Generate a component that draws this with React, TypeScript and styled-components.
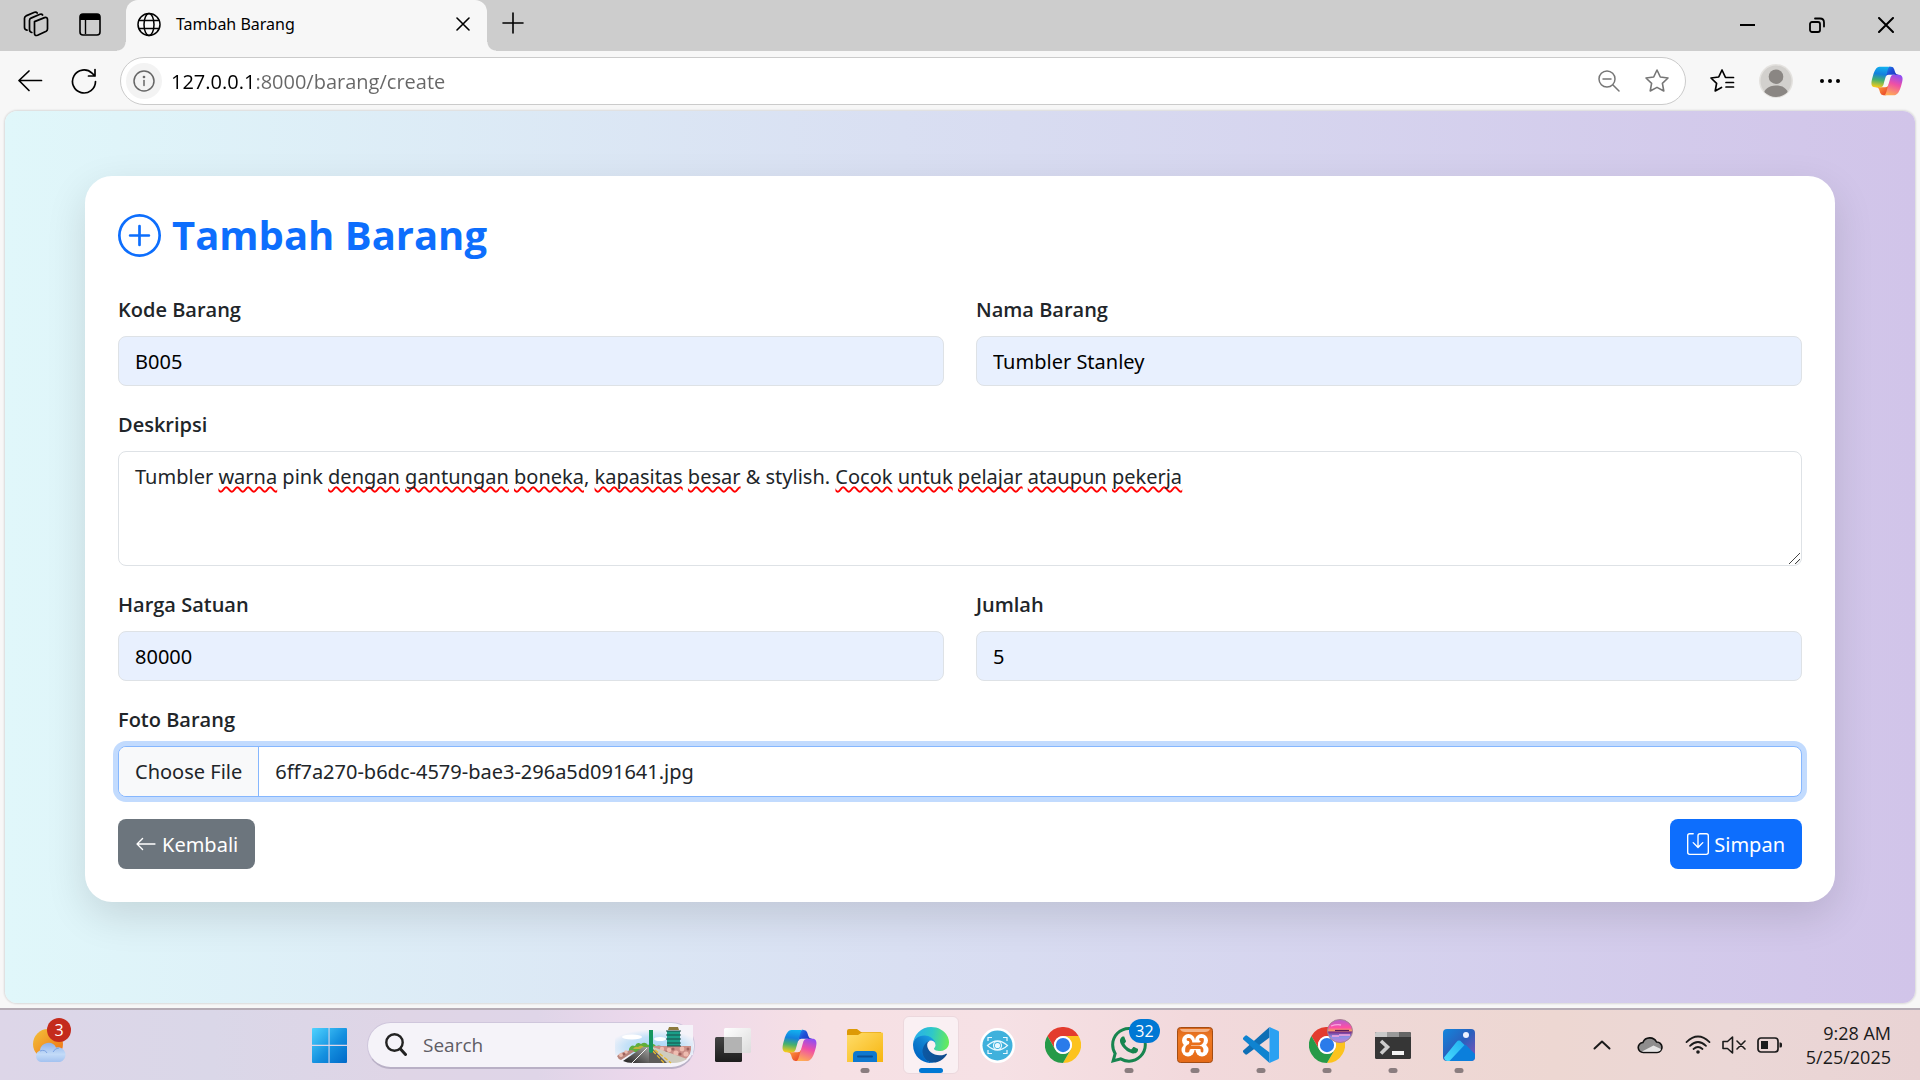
import React, { useEffect, useRef } from "react";
import styled, { createGlobalStyle, css } from "styled-components";
import { BsArrowLeft, BsPlusCircle, BsSave, BsWhatsapp } from "react-icons/bs";

const FONT = `"Open Sans", "Noto Sans", sans-serif`;
const FORM_FONT = `"Noto Sans", "Open Sans", sans-serif`;

const GlobalStyle = createGlobalStyle`
  *, *::before, *::after { box-sizing: border-box; }
  body { margin: 0; font-family: ${FONT}; color: #212529; }
  button, input, textarea { font-family: inherit; }
  svg { display: block; flex-shrink: 0; }
`;

/* ---------- shell ---------- */

const Screen = styled.div`
  display: flex;
  flex-direction: column;
  min-height: 100vh;
  background: #f7f7f7;
`;

const IconButton = styled.button<{ $w?: number; $h?: number; $color?: string }>`
  display: flex;
  align-items: center;
  justify-content: center;
  flex-shrink: 0;
  width: ${(p) => p.$w ?? 54}px;
  height: ${(p) => p.$h ?? 48}px;
  padding: 0;
  border: 0;
  background: transparent;
  color: ${(p) => p.$color ?? "#000"};
`;

const TabStrip = styled.header`
  display: flex;
  align-items: stretch;
  height: 51px;
  padding-left: 9px;
  background: #cdcdcd;
`;

const Tab = styled.div`
  position: relative;
  display: flex;
  align-items: center;
  gap: 15px;
  width: 361px;
  margin-left: 9px;
  padding: 0 6px 3px 11px;
  border-radius: 12px 12px 0 0;
  background: #f7f7f7;
  color: #000;
  font-family: ${FORM_FONT};
  font-size: 16px;

  &::before,
  &::after {
    content: "";
    position: absolute;
    bottom: 0;
    width: 9px;
    height: 9px;
  }
  &::before {
    right: 100%;
    background: radial-gradient(circle at 0 0, transparent 8px, #f7f7f7 9px);
  }
  &::after {
    left: 100%;
    background: radial-gradient(circle at 100% 0, transparent 8px, #f7f7f7 9px);
  }
`;

const TabTitle = styled.span`
  flex: 1;
`;

const WindowControls = styled.div`
  display: flex;
  margin-left: auto;
`;

const Toolbar = styled.nav`
  display: flex;
  align-items: center;
  height: 60px;
  padding: 0 3px;
`;

const AddressBar = styled.div`
  display: flex;
  align-items: center;
  flex: 1;
  height: 48px;
  margin: 0 9px;
  padding: 0 4px 0 5px;
  border: 1px solid #cbcbcb;
  border-radius: 24px;
  background: #fff;
`;

const SiteInfo = styled(IconButton)`
  border-radius: 50%;
  background: #f3f3f3;
`;

const AddressInput = styled.input`
  flex: 1;
  min-width: 0;
  height: 36px;
  margin-left: 9px;
  padding: 0;
  border: 0;
  outline: 0;
  background: linear-gradient(90deg, #000 80px, #666 80px);
  background-clip: text;
  -webkit-text-fill-color: transparent;
  font-size: 20px;
`;

/* ---------- page ---------- */

const Viewport = styled.main`
  flex: 1;
  margin: 0 5px 5px;
  padding: 65px 80px;
  border-radius: 12px;
  box-shadow: 0 0 2px 1px rgba(0, 0, 0, 0.12);
  background: linear-gradient(to right, #e0f7fa, #d1c4e9);
`;

const Card = styled.section`
  padding: 33px;
  border-radius: 27px;
  background: #fff;
  box-shadow: 0 14px 40px rgba(0, 0, 0, 0.12);
`;

const Title = styled.h2`
  display: flex;
  align-items: center;
  gap: 11px;
  margin: 0 0 32px;
  color: #0d6efd;
  font-size: 40px;
  font-weight: 700;
  line-height: 52px;
`;

const FieldGrid = styled.div`
  display: grid;
  grid-template-columns: repeat(2, minmax(0, 1fr));
  gap: 22px 32px;
`;

const Field = styled.div<{ $wide?: boolean }>`
  display: flex;
  flex-direction: column;
  grid-column: ${(p) => (p.$wide ? "1 / -1" : "auto")};
`;

const Label = styled.label`
  margin-bottom: 9px;
  font-size: 20px;
  font-weight: 600;
  line-height: 34px;
`;

const control = css`
  width: 100%;
  margin: 0;
  border: 1px solid #dee2e6;
  border-radius: 8px;
  outline: 0;
  color: #212529;
  font-family: ${FORM_FONT};
  font-size: 20px;
  line-height: 32px;
`;

const TextInput = styled.input`
  ${control}
  height: 50px;
  padding: 8px 16px;
  background: #e8f0fe;
  color: #000;
`;

const TextAreaStack = styled.div`
  display: grid;
  & > * {
    grid-area: 1 / 1;
  }
`;

const TextArea = styled.textarea`
  ${control}
  height: 115px;
  padding: 9px 16px;
  background: transparent;
  resize: vertical;

  &::-webkit-resizer {
    background: linear-gradient(
        135deg,
        transparent 46%,
        #444 47%,
        #444 53%,
        transparent 54%,
        transparent 74%,
        #444 75%,
        #444 81%,
        transparent 82%
      )
      3px 3px / 11px 11px no-repeat;
  }
`;

const SpellLayer = styled.div`
  padding: 10px 17px;
  color: transparent;
  font-family: ${FORM_FONT};
  font-size: 20px;
  line-height: 32px;
  pointer-events: none;
`;

const Misspelt = styled.span`
  text-decoration: underline wavy #f00 2px;
  text-decoration-skip-ink: none;
  text-underline-offset: 2px;
`;

const FileInput = styled.input`
  ${control}
  height: 51px;
  overflow: hidden;
  padding: 8px 16px;
  border-color: #86b7fe;
  background: #fff;
  box-shadow: 0 0 0 5px #c2dbfe;

  &::file-selector-button {
    height: 51px;
    margin: -9px 16px -9px -16px;
    padding: 0 16px;
    border: 0 solid #86b7fe;
    border-right-width: 1px;
    background: #f8f9fa;
    color: #212529;
    font: inherit;
  }
`;

const Actions = styled.div`
  display: flex;
  justify-content: space-between;
  margin-top: 22px;
`;

const buttonLook = css`
  display: flex;
  align-items: center;
  gap: 5px;
  height: 50px;
  padding: 0 17px;
  border: 0;
  border-radius: 8px;
  color: #fff;
  font-family: ${FORM_FONT};
  font-size: 20px;
  text-decoration: none;
`;

const BackLink = styled.a`
  ${buttonLook}
  background: #6c757d;
`;

const SaveButton = styled.button`
  ${buttonLook}
  background: #0d6efd;
`;

/* ---------- taskbar ---------- */

const Taskbar = styled.footer`
  display: flex;
  align-items: center;
  height: 72px;
  padding-right: 29px;
  border-top: 2px solid #b5acb5;
  background: linear-gradient(
    90deg,
    #ddd6e8 0%,
    #dad7e8 11%,
    #dfd5e6 21%,
    #dfd5e8 28%,
    #edd8ec 34%,
    #f6e0e4 43%,
    #f6e1e5 52%,
    #f2d9dc 62%,
    #efd8d7 70%,
    #edd7d2 81%,
    #ebd7d6 90%,
    #e9d3d4 100%
  );
`;

const Widgets = styled(IconButton)`
  position: relative;
  justify-content: flex-start;
  padding-left: 32px;
`;

const Badge = styled.span<{ $bg: string; $left: number; $w: number }>`
  position: absolute;
  top: -3px;
  left: ${(p) => p.$left}px;
  width: ${(p) => p.$w}px;
  height: 24px;
  border-radius: 12px;
  background: ${(p) => p.$bg};
  color: #fff;
  font-size: 16px;
  line-height: 24px;
  text-align: center;
`;

const SearchBox = styled.label`
  display: flex;
  align-items: center;
  flex-shrink: 0;
  gap: 16px;
  width: 328px;
  height: 47px;
  margin: 0 5px 0 10px;
  padding: 0 1px 0 17px;
  border: 1px solid #cfc6dc;
  border-bottom: 2px solid #b9b0c6;
  border-radius: 24px;
  background: #f5f3f9;
`;

const SearchInput = styled.input`
  flex: 1;
  min-width: 0;
  padding: 0;
  border: 0;
  outline: 0;
  background: transparent;
  font-size: 19px;
  &::placeholder {
    color: #5f5c64;
  }
`;

const AppButton = styled.button<{ $active?: boolean }>`
  position: relative;
  display: flex;
  align-items: center;
  justify-content: center;
  flex-shrink: 0;
  width: 56px;
  height: 58px;
  margin: 0 5px;
  padding: 0;
  border: 1px solid ${(p) => (p.$active ? "#ecd8dd" : "transparent")};
  border-radius: 6px;
  background: ${(p) => (p.$active ? "#faf0f3" : "transparent")};
`;

const Running = styled.span<{ $active?: boolean }>`
  position: absolute;
  bottom: 0;
  left: 50%;
  width: ${(p) => (p.$active ? 24 : 9)}px;
  height: 5px;
  border-radius: 3px;
  background: ${(p) => (p.$active ? "#0078d4" : "#8a7d7f")};
  transform: translateX(-50%);
`;

const AppBadge = styled(Badge)`
  top: 2px;
`;

const Tray = styled.div`
  display: flex;
  align-items: center;
  margin-left: auto;
  color: #1b1b1b;
`;

const Clock = styled.time`
  width: 97px;
  font-size: 18px;
  line-height: 24px;
  text-align: right;
  white-space: nowrap;
`;

/* ---------- drawings ---------- */

const line = { fill: "none", stroke: "currentColor", strokeWidth: 1.6, strokeLinecap: "round", strokeLinejoin: "round" } as const;

const WorkspacesIcon = () => (
  <svg width="26" height="26" viewBox="0 0 26 26" {...line} strokeWidth={1.7}>
    <path d="M11.5 10.6 21.5 6.6Q24.5 5.8 24.5 8.5V18Q24.5 19.500 23.200 20.200L14.600 24.300Q11.500 25.200 11.500 22.500Z" />
    <path d="M8.800 21.500Q6.500 21 6.500 18.800V9.500Q6.500 7.800 8 7.100L17 3.200Q18.800 2.600 19.600 4" />
    <path d="M4 19.200Q1.500 18.600 1.500 16.200V7.300Q1.500 5.600 3 4.900L11.500 1.300Q13.300.7 14.200 2" />
  </svg>
);

const TabActionsIcon = () => (
  <svg width="22" height="23" viewBox="0 0 22 23" fill="none">
    <rect x="1" y="1" width="20" height="21" rx="3" stroke="#000" strokeWidth="1.6" />
    <path d="M1 7V4a3 3 0 0 1 3-3h14a3 3 0 0 1 3 3v3Z" fill="#000" />
    <path d="M6.500 7v14" stroke="#000" strokeWidth="1.400" />
  </svg>
);

const GlobeIcon = () => (
  <svg width="24" height="25" viewBox="0 0 24 24" {...line} strokeWidth={1.5}>
    <circle cx="12" cy="12" r="11" />
    <ellipse cx="12" cy="12" rx="5" ry="11" />
    <path d="M2 8h20M2 16h20" />
  </svg>
);

const Cross = ({ s, w = 1.6 }: { s: number; w?: number }) => (
  <svg width={s} height={s} viewBox={`0 0 ${s} ${s}`} {...line} strokeWidth={w}>
    <path d={`M1 1 ${s - 1} ${s - 1}M${s - 1} 1 1 ${s - 1}`} />
  </svg>
);

const PlusIcon = () => (
  <svg width="22" height="22" viewBox="0 0 22 22" {...line}>
    <path d="M11 1v20M1 11h20" />
  </svg>
);

const MinimizeIcon = () => (
  <svg width="16" height="16" viewBox="0 0 16 16" {...line} strokeWidth={2} strokeLinecap="butt">
    <path d="M0 8h15" />
  </svg>
);

const RestoreIcon = () => (
  <svg width="16" height="16" viewBox="0 0 16 16" {...line} strokeWidth={1.8}>
    <rect x="1" y="5" width="10" height="10" rx="2" />
    <path d="M6 1.500h5Q15 1.500 15 5.500V9.500" />
  </svg>
);

const BackIcon = () => (
  <svg width="26" height="24" viewBox="0 0 26 24" {...line} strokeWidth={1.7}>
    <path d="M24.500 11.500H2M12 2 2 11.500 12 21.500" />
  </svg>
);

const RefreshIcon = () => (
  <svg width="26" height="26" viewBox="0 0 26 26" {...line} strokeWidth={1.7}>
    <path d="M24.500 13.500A11.500 11.500 0 1 1 21 5.200L24 8M24 1.500V8h-6.500" />
  </svg>
);

const InfoIcon = () => (
  <svg width="22" height="22" viewBox="0 0 22 22" {...line} strokeWidth={1.5}>
    <circle cx="11" cy="11" r="10" />
    <path d="M11 10.500v5" />
    <circle cx="11" cy="7" r=".6" fill="currentColor" />
  </svg>
);

const ZoomOutIcon = () => (
  <svg width="22" height="22" viewBox="0 0 22 22" {...line} strokeWidth={1.5}>
    <circle cx="9" cy="9" r="8" />
    <path d="M15 15l6 6M5 9h8" />
  </svg>
);

const StarIcon = () => (
  <svg width="26" height="26" viewBox="0 0 26 26" {...line} strokeWidth={1.6}>
    <path d="M13 2l3.300 7 7.700 1-5.600 5.300 1.400 7.700L13 19.400 6.200 23l1.400-7.700L2 10l7.700-1Z" />
  </svg>
);

const FavoritesIcon = () => (
  <svg width="26" height="26" viewBox="0 0 26 26" {...line} strokeWidth={1.7}>
    <path d="M24.500 9.500H16.500L13 2 9.700 9 2 10l5.600 5.300L6.200 23l6.300-3.600M17 14.500h7.500M17 19h7.500" />
  </svg>
);

const ProfileIcon = () => (
  <svg width="34" height="34" viewBox="0 0 34 34">
    <defs>
      <clipPath id="avatar">
        <circle cx="17" cy="17" r="16" />
      </clipPath>
    </defs>
    <circle cx="17" cy="17" r="17" fill="#e4e2df" />
    <circle cx="17" cy="17" r="15.500" fill="#d2d0cd" />
    <g fill="#8a8683" clipPath="url(#avatar)">
      <circle cx="17" cy="12.700" r="7.300" />
      <path d="M4 34c0-8 5-12.500 13-12.500S30 26 30 34Z" />
    </g>
  </svg>
);

const DotsIcon = () => (
  <svg width="22" height="6" viewBox="0 0 22 6" fill="currentColor">
    <circle cx="3" cy="3" r="2" />
    <circle cx="11" cy="3" r="2" />
    <circle cx="19" cy="3" r="2" />
  </svg>
);

const CopilotIcon = ({ id, size }: { id: string; size: number }) => (
  <svg width={size} height={size} viewBox="0 2 48 44">
    <defs>
      <linearGradient id={`${id}a`} x1="20" y1="4" x2="38" y2="18" gradientUnits="userSpaceOnUse">
        <stop offset="0" stopColor="#1aa0f0" />
        <stop offset=".5" stopColor="#1f4fd8" />
        <stop offset="1" stopColor="#2230b8" />
      </linearGradient>
      <linearGradient id={`${id}b`} x1="12" y1="30" x2="24" y2="44" gradientUnits="userSpaceOnUse">
        <stop offset="0" stopColor="#ffa03c" />
        <stop offset="1" stopColor="#e8402a" />
      </linearGradient>
      <linearGradient id={`${id}c`} x1="16" y1="4" x2="12" y2="33" gradientUnits="userSpaceOnUse">
        <stop offset="0" stopColor="#12b0ee" />
        <stop offset=".35" stopColor="#1380dd" />
        <stop offset=".65" stopColor="#46b06e" />
        <stop offset="1" stopColor="#f8cc18" />
      </linearGradient>
      <linearGradient id={`${id}d`} x1="38" y1="15" x2="28" y2="44" gradientUnits="userSpaceOnUse">
        <stop offset="0" stopColor="#8d4df5" />
        <stop offset=".45" stopColor="#ef4fa6" />
        <stop offset="1" stopColor="#ffad55" />
      </linearGradient>
    </defs>
    <path fill={`url(#${id}a)`} d="M34.142 7.325A4.630 4.630 0 0 0 29.700 4h-1.350a4.630 4.630 0 0 0-4.554 3.794L21.480 20.407l.575-1.965a4.630 4.630 0 0 1 4.444-3.330h7.853l3.294 1.282 3.175-1.283h-.926a4.630 4.630 0 0 1-4.443-3.325l-1.310-4.461Z" />
    <path fill={`url(#${id}b)`} d="M14.330 40.656A4.630 4.630 0 0 0 18.779 44h2.870a4.630 4.630 0 0 0 4.629-4.510l.312-12.163-.654 2.233a4.630 4.630 0 0 1-4.443 3.329h-7.919l-2.823-1.531-3.057 1.530h.911a4.630 4.630 0 0 1 4.447 3.344l1.279 4.424Z" />
    <path fill={`url(#${id}c)`} d="M29.500 4H13.460c-4.583 0-7.333 6.057-9.167 12.113-2.172 7.177-5.015 16.775 3.208 16.775h6.926a4.630 4.630 0 0 0 4.468-3.370c1.408-4.956 3.880-13.600 5.820-20.182.983-3.338 1.802-5.336 2.600-5.990C28.100 3.600 29.655 4 29.500 4Z" />
    <path fill={`url(#${id}d)`} d="M18.498 44h16.040c4.582 0 7.332-6.058 9.165-12.115 2.172-7.178 5.015-16.777-3.207-16.777h-6.927a4.630 4.630 0 0 0-4.467 3.370c-1.408 4.957-3.880 13.603-5.819 20.186-.984 3.339-1.802 4.500-2.600 5.000-.706.500-2.340.336-2.185.336Z" />
  </svg>
);

const WeatherIcon = () => (
  <svg width="34" height="36" viewBox="0 0 34 36">
    <defs>
      <linearGradient id="sun" x1="0" y1="0" x2="1" y2="1">
        <stop offset="0" stopColor="#f3c33a" />
        <stop offset="1" stopColor="#ee6a12" />
      </linearGradient>
      <linearGradient id="wcloud" x1="0" y1="0" x2="0" y2="1">
        <stop offset="0" stopColor="#8fb2ea" />
        <stop offset=".6" stopColor="#c3dbf8" />
        <stop offset="1" stopColor="#a3c2f0" />
      </linearGradient>
    </defs>
    <circle cx="16" cy="17" r="15" fill="url(#sun)" />
    <path d="M9 35a6 6 0 0 1-1-11.500 8.500 8.500 0 0 1 16-3 7.500 7.500 0 0 1 4 14.500Z" fill="url(#wcloud)" />
    <path d="M8 24q5-2 7 2M21 25q2-4 6-4" fill="none" stroke="#7ba2e2" />
  </svg>
);

const StartIcon = () => (
  <svg width="35" height="35" viewBox="0 0 35 35">
    <defs>
      <linearGradient id="win" x1="0" y1="0" x2="35" y2="35" gradientUnits="userSpaceOnUse">
        <stop offset="0" stopColor="#4fd3ff" />
        <stop offset=".55" stopColor="#1490df" />
        <stop offset="1" stopColor="#0069c8" />
      </linearGradient>
    </defs>
    <path fill="url(#win)" d="M1 0h15.500v16.700H0V1a1 1 0 0 1 1-1ZM17.600 0H34a1 1 0 0 1 1 1v15.700H17.600ZM0 18h16.500v17H1a1 1 0 0 1-1-1ZM17.600 18H35v16a1 1 0 0 1-1 1H17.600Z" />
  </svg>
);

const SearchIcon = () => (
  <svg width="22" height="23" viewBox="0 0 22 23" fill="none" stroke="#222" strokeWidth="2.400" strokeLinecap="round">
    <circle cx="9.500" cy="9.500" r="8.200" />
    <path d="M15.500 16l5 5.500" strokeWidth="3" />
  </svg>
);

const SceneArt = () => (
  <svg width="78" height="40" viewBox="0 0 78 40">
    <defs>
      <clipPath id="scene">
        <path d="M1 20C3 9 14 3 27 1H50L76 20C75 31 69 38 58 38H22C10 38 1 32 1 20Z" />
      </clipPath>
      <radialGradient id="sky" cx=".5" cy=".75" r=".6">
        <stop offset="0" stopColor="#a6d5f8" />
        <stop offset=".6" stopColor="#c4e1f8" />
        <stop offset="1" stopColor="#f5f3f9" />
      </radialGradient>
      <linearGradient id="road" x1="0" y1="1" x2="1" y2="0">
        <stop offset="0" stopColor="#1e1e1e" />
        <stop offset="1" stopColor="#a9a8a6" />
      </linearGradient>
    </defs>
    <path d="M0 0h78v30H0Z" fill="url(#sky)" />
    <ellipse cx="17" cy="12" rx="10" ry="2.500" fill="#fff" />
    <ellipse cx="45" cy="14" rx="6" ry="2" fill="#fff" />
    <g clipPath="url(#scene)">
      <path d="M14 24q2-5 6-3 2-5 6-2 4-3 7 1 5-3 8 1 5-2 8 3l2 3H14Z" fill="#5fae3c" />
      <path d="M18 24q2-3 5-2 3-3 6 0l2 2Z" fill="#c0b23a" />
    </g>
    <path d="M2 31Q6 27 16 25l4 1-14 9Q3 34 2 31Z" fill="#b9857c" />
    <path d="M38 21h38q1 8-6 14L42 26Z" fill="#cb8f88" />
    <g fill="#eebcb0">
      <circle cx="6" cy="30" r="2" /><circle cx="11" cy="27" r="1.800" /><circle cx="47" cy="24" r="2.200" />
      <circle cx="54" cy="25" r="2.300" /><circle cx="61" cy="28" r="2.600" /><circle cx="67" cy="24" r="2.400" /><circle cx="71" cy="29" r="2.600" />
    </g>
    <g fill="#a0605c">
      <circle cx="9" cy="29" r="1.300" /><circle cx="51" cy="27" r="1.500" /><circle cx="58" cy="24" r="1.600" /><circle cx="65" cy="29" r="1.600" /><circle cx="73" cy="24" r="1.500" />
    </g>
    <path d="M8 36 28 22h7l-1 16H18Q12 38 8 36Z" fill="url(#road)" />
    <path d="M34 22h4L72 34q-6 4-14 4H34Z" fill="#cfccbf" />
    <path d="M34 23 37 23 52 38H34Z" fill="#5d5c5a" />
    <path d="M17 38 32 23" stroke="#f2f2f2" strokeWidth="1" />
    <path d="M38 26l11 12M40 25l16 13" stroke="#e8b92e" strokeWidth="1.300" strokeDasharray="4 2" />
    <path d="M34 5h4v22l-2 1-2-1Z" fill="#15965f" />
    <path d="M52 6h13v15H52Z" fill="#1a9e88" />
    <path d="M54 2h9l1 3H53Z" fill="#8b7a3d" />
    <path d="M51 6h15M51 10h15M51 14h15M52 18h14M52 21h14" stroke="#1c4a47" strokeWidth="1.200" />
  </svg>
);

const TaskViewIcon = () => (
  <svg width="36" height="34" viewBox="0 0 36 34">
    <defs>
      <linearGradient id="tvd" x1="0" y1="0" x2="0" y2="1">
        <stop offset="0" stopColor="#444" />
        <stop offset="1" stopColor="#1d1d1d" />
      </linearGradient>
      <linearGradient id="tvl" x1="0" y1="0" x2="1" y2="1">
        <stop offset="0" stopColor="#fff" />
        <stop offset="1" stopColor="#dcdcdc" />
      </linearGradient>
    </defs>
    <rect x="0" y="9" width="27" height="25" rx="1.500" fill="url(#tvd)" />
    <rect x="9" y="0" width="27" height="25" rx="1.500" fill="url(#tvl)" />
    <path d="M9 9h18v16H10.500A1.500 1.500 0 0 1 9 23.500Z" fill="#b3b3b3" />
  </svg>
);

const ExplorerIcon = () => (
  <svg width="36" height="33" viewBox="0 0 36 33">
    <defs>
      <linearGradient id="fold" x1="0" y1="0" x2="1" y2="1">
        <stop offset="0" stopColor="#ffdd6b" />
        <stop offset="1" stopColor="#f7b50f" />
      </linearGradient>
    </defs>
    <path d="M0 2a2 2 0 0 1 2-2h8l4 3h20v6H0Z" fill="#dd9a06" />
    <path d="M0 6h11l4-2.500h20a1 1 0 0 1 1 1V33H0Z" fill="url(#fold)" />
    <path d="M6 33v-7a4 4 0 0 1 4-4h16a4 4 0 0 1 4 4v7Z" fill="#0f78cf" />
    <path d="M11 27.500h14" stroke="#0a4f96" strokeWidth="2" strokeLinecap="round" />
  </svg>
);

const EdgeIcon = () => (
  <svg width="36" height="36" viewBox="0 0 256 256">
    <defs>
      <linearGradient id="ed1" x1="63" y1="177" x2="241" y2="177" gradientUnits="userSpaceOnUse">
        <stop offset="0" stopColor="#0c59a4" />
        <stop offset="1" stopColor="#114a8b" />
      </linearGradient>
      <linearGradient id="ed2" x1="150" y1="90" x2="45" y2="220" gradientUnits="userSpaceOnUse">
        <stop offset="0" stopColor="#1b9de2" />
        <stop offset=".4" stopColor="#1080d0" />
        <stop offset="1" stopColor="#0067c4" />
      </linearGradient>
      <linearGradient id="ed3" x1="10" y1="70" x2="250" y2="110" gradientUnits="userSpaceOnUse">
        <stop offset="0" stopColor="#28afea" />
        <stop offset=".5" stopColor="#2fc8c8" />
        <stop offset="1" stopColor="#66eb5a" />
      </linearGradient>
    </defs>
    <path fill="url(#ed1)" d="M235.680 190.200c-3.400 1.770-6.970 3.300-10.620 4.580a102.900 102.900 0 0 1-35.900 6.460c-47.320 0-88.540-32.550-88.540-74.320A31.480 31.480 0 0 1 117.050 99.310c-42.800 1.800-53.800 46.400-53.800 72.530 0 73.880 68.090 81.370 82.760 81.370 7.910 0 19.840-2.300 27-4.560l1.310-.44a128.340 128.340 0 0 0 66.600-52.800 4 4 0 0 0-5.240-5.210Z" />
    <path fill="url(#ed2)" d="M105.730 241.420a79.200 79.200 0 0 1-22.740-21.340 80.720 80.720 0 0 1 29.530-120c3.120-1.470 8.450-4.050 15.540-3.980a32.350 32.350 0 0 1 25.690 13 31.880 31.880 0 0 1 6.360 18.660c0-.21 24.460-79.600-80-79.600-43.900 0-80 41.660-80 78.210a130.150 130.150 0 0 0 12.110 56 128 128 0 0 0 156.380 67.110 75.550 75.550 0 0 1-62.780-8Z" />
    <path fill="url(#ed3)" d="M152.330 148.860c-.81 1.050-3.300 2.500-3.300 5.660 0 2.610 1.700 5.120 4.720 7.230 14.380 10 41.490 8.680 41.560 8.680a59.560 59.560 0 0 0 30.270-8.350 61.380 61.380 0 0 0 30.430-52.880c.26-22.410-8-37.310-11.340-43.910C223.440 23.740 177.720.12 128 .12A128 128 0 0 0 .12 126.700c.48-36.540 36.800-66.050 80-66.050 3.500 0 23.460.34 42 10.070 16.340 8.580 24.900 18.940 30.850 29.210 6.180 10.670 7.280 24.150 7.280 29.520 0 5.370-2.740 13.330-7.920 19.410Z" />
  </svg>
);

const EyeIcon = () => (
  <svg width="35" height="35" viewBox="0 0 35 35" fill="none" stroke="#e9f8ff" strokeWidth="1.200">
    <circle cx="17.500" cy="17.500" r="17.500" fill="#fff" stroke="none" />
    <circle cx="17.500" cy="17.500" r="15" fill="#3fb1dc" stroke="none" />
    <path d="M8 13V9.500h4M23 9.500h4V13M27 22v3.500h-4M12 25.500H8V22" />
    <path d="M7.500 17.500Q17.500 8.500 27.500 17.500 17.500 26.500 7.500 17.500Z" />
    <circle cx="17.500" cy="17.500" r="4" />
    <circle cx="17.500" cy="17.500" r="2" fill="#e9f8ff" />
  </svg>
);

const ChromeIcon = () => (
  <svg width="36" height="36" viewBox="0 0 48 48">
    <path d="M3.200 12A24 24 0 0 1 44.800 12H24A12 12 0 0 0 13.600 30Z" fill="#e33b2e" />
    <path d="M44.800 12A24 24 0 0 1 24 48L34.400 30A12 12 0 0 0 24 12Z" fill="#fcc31e" />
    <path d="M24 48A24 24 0 0 1 3.200 12L13.600 30A12 12 0 0 0 34.400 30Z" fill="#269a48" />
    <circle cx="24" cy="24" r="12" fill="#fff" />
    <circle cx="24" cy="24" r="9.500" fill="#2a7bea" />
  </svg>
);

const ProfileChip = () => (
  <svg width="26" height="24" viewBox="0 0 26 24">
    <defs>
      <linearGradient id="chip" x1="0" y1="0" x2="0" y2="1">
        <stop offset="0" stopColor="#b25fd0" />
        <stop offset=".35" stopColor="#ff4fa4" />
        <stop offset=".48" stopColor="#f59a6a" />
        <stop offset=".55" stopColor="#7a2f8a" />
        <stop offset=".75" stopColor="#8a93e6" />
        <stop offset="1" stopColor="#c77bd8" />
      </linearGradient>
    </defs>
    <ellipse cx="13" cy="12" rx="12.500" ry="11.500" fill="url(#chip)" stroke="#a9808f" />
    <path d="M4 7q6-2 10-1M12 16h11M5 17h7" stroke="#f9a7e0" strokeWidth="1.300" fill="none" />
    <path d="M8 11.500h14" stroke="#5a1c58" strokeWidth="1.200" />
  </svg>
);

const ChipSlot = styled.span`
  position: absolute;
  top: 2px;
  left: 27px;
`;

const XamppIcon = () => (
  <svg width="36" height="36" viewBox="0 0 36 36">
    <defs>
      <linearGradient id="xampp" x1="0" y1="0" x2="0" y2="1">
        <stop offset="0" stopColor="#d9641a" />
        <stop offset=".3" stopColor="#f07a22" />
        <stop offset="1" stopColor="#e56a18" />
      </linearGradient>
    </defs>
    <rect x=".5" y=".5" width="35" height="35" rx="3" fill="url(#xampp)" stroke="#a34d14" />
    <path d="M3 2h30q-1 3-5 3H8Q4 5 3 2Z" fill="#f3b183" />
    <g fill="#fff">
      <circle cx="11.500" cy="13.500" r="6.500" />
      <circle cx="24.500" cy="13.500" r="6.500" />
      <circle cx="11" cy="23" r="6.500" />
      <circle cx="25" cy="23" r="6.500" />
      <path d="M11 13h14v10H11Z" />
    </g>
    <path d="M11 12.500h1.500q2.500 2.500.5 5.500-4 1-3.500 6h1.500q0-3.500 3-3.500h8.500q3 0 2.500 3.500M23.500 12.500h2q0 3.500-3 4.500h-9" fill="none" stroke="#e9701c" strokeWidth="2.800" strokeLinecap="round" strokeLinejoin="round" />
  </svg>
);

const VsCodeIcon = () => (
  <svg width="36" height="36" viewBox="0 0 36 36">
    <path d="M26.500 0v10.500L4.200 27.200a1.500 1.500 0 0 1-2 0L.5 25.500a1.500 1.500 0 0 1 0-2.300Z" fill="#0f6fb5" />
    <path d="M26.500 36V25.500L4.200 8.800a1.500 1.500 0 0 0-2 0L.5 10.500a1.500 1.500 0 0 0 0 2.300Z" fill="#0f83d0" />
    <path d="M26.500 0 35 3.700a1.600 1.600 0 0 1 1 1.500v25.600a1.600 1.600 0 0 1-1 1.500L26.500 36Z" fill="#2aa1f2" />
  </svg>
);

const TerminalIcon = () => (
  <svg width="36" height="27" viewBox="0 0 36 27">
    <rect width="36" height="27" rx="1.500" fill="#363636" />
    <path d="M1.500 0H12v5H0V1.500A1.500 1.500 0 0 1 1.500 0Z" fill="#c9c9c9" />
    <path d="M12 0h12v5H12Z" fill="#999" />
    <path d="M24 0h10.500A1.500 1.500 0 0 1 36 1.500V5H24Z" fill="#666" />
    <path d="M6 9l6.500 6L6 21.500" fill="none" stroke="#ccc" strokeWidth="3.600" />
    <path d="M17 19h12v4H17Z" fill="#f4f4f4" />
  </svg>
);

const PhotosIcon = () => (
  <svg width="32" height="32" viewBox="0 0 32 32">
    <defs>
      <linearGradient id="ph1" x1="0" y1="0" x2="1" y2="1">
        <stop offset="0" stopColor="#1286dd" />
        <stop offset=".5" stopColor="#2a5fbc" />
        <stop offset="1" stopColor="#8b50b8" />
      </linearGradient>
      <linearGradient id="ph2" x1="0" y1="1" x2="1" y2="0">
        <stop offset="0" stopColor="#4adcff" />
        <stop offset="1" stopColor="#1fb0ef" />
      </linearGradient>
    </defs>
    <rect width="32" height="32" rx="4" fill="url(#ph1)" />
    <path d="M6 32 20 16.500q2-1.500 4 .5l8 8V28a4 4 0 0 1-4 4Z" fill="#0b7fdc" />
    <path d="M1 28.500 13.500 13q2.500-2.800 5 0l3 3L6.500 32H4a4 4 0 0 1-3-3.500Z" fill="url(#ph2)" />
    <circle cx="23" cy="6" r="3" fill="#eef3ff" />
  </svg>
);

const ChevronUp = () => (
  <svg width="18" height="10" viewBox="0 0 18 10" {...line} strokeWidth={2}>
    <path d="M1.500 8.500 9 1.500l7.500 7" />
  </svg>
);

const CloudIcon = () => (
  <svg width="26" height="18" viewBox="0 0 26 18">
    <path d="M6.500 16.500a5 5 0 0 1-.6-10A7.500 7.500 0 0 1 19.500 6a5.200 5.200 0 0 1 .5 10.500Z" fill="#8f8d8d" stroke="#111" strokeWidth="1.600" />
    <path d="M5 15.500 16.500 9.500 24 13q-1 2.800-4 2.800H6.500Z" fill="#e6e4e4" />
  </svg>
);

const WifiIcon = () => (
  <svg width="26" height="20" viewBox="0 0 26 20" {...line} strokeWidth={1.7}>
    <path d="M1.500 7.200Q13-4.200 24.500 7.200M5 10.800q8-7.600 16 0M8.500 14q4.500-4 9 0" />
    <circle cx="13" cy="17" r="1.800" fill="currentColor" stroke="none" />
  </svg>
);

const MutedIcon = () => (
  <svg width="24" height="18" viewBox="0 0 24 18" {...line} strokeWidth={1.600}>
    <path d="M10.500 1v16L5.500 12.500H1V5.500h4.500ZM15 5l8 8M23 5l-8 8" />
  </svg>
);

const BatteryIcon = () => (
  <svg width="26" height="16" viewBox="0 0 26 16">
    <rect x="1" y="1" width="20" height="14" rx="3" fill="none" stroke="#1b1b1b" strokeWidth="1.700" />
    <path d="M4 4h7v8H4Z" fill="#1b1b1b" />
    <path d="M22.500 5.500h1a1.500 1.500 0 0 1 1.500 1.500v2a1.500 1.500 0 0 1-1.500 1.500h-1Z" fill="#1b1b1b" />
  </svg>
);

/* ---------- content ---------- */

const DESCRIPTION =
  "Tumbler warna pink dengan gantungan boneka, kapasitas besar & stylish. Cocok untuk pelajar ataupun pekerja";
const KNOWN_WORDS = ["Tumbler", "pink", "&", "stylish."];
const PHOTO_NAME = "6ff7a270-b6dc-4579-bae3-296a5d091641.jpg";

const apps: { name: string; icon: React.ReactNode; running?: boolean; active?: boolean }[] = [
  { name: "Task View", icon: <TaskViewIcon /> },
  { name: "Copilot", icon: <CopilotIcon id="tb" size={37} /> },
  { name: "File Explorer", icon: <ExplorerIcon />, running: true },
  { name: "Microsoft Edge", icon: <EdgeIcon />, running: true, active: true },
  { name: "Lens", icon: <EyeIcon /> },
  { name: "Google Chrome", icon: <ChromeIcon /> },
  {
    name: "WhatsApp",
    icon: (
      <>
        <BsWhatsapp size={36} color="#17854f" />
        <AppBadge $bg="#0078d4" $left={27} $w={31}>32</AppBadge>
      </>
    ),
    running: true,
  },
  { name: "XAMPP", icon: <XamppIcon />, running: true },
  { name: "Visual Studio Code", icon: <VsCodeIcon />, running: true },
  {
    name: "Google Chrome, second profile",
    icon: (
      <>
        <ChromeIcon />
        <ChipSlot><ProfileChip /></ChipSlot>
      </>
    ),
    running: true,
  },
  { name: "Terminal", icon: <TerminalIcon />, running: true },
  { name: "Photos", icon: <PhotosIcon />, running: true },
];

const Description = () => (
  <TextAreaStack>
    <SpellLayer aria-hidden="true">
      {DESCRIPTION.split(" ").map((word, i) => {
        const bare = word.replace(",", "");
        return (
          <React.Fragment key={i}>
            {i > 0 && " "}
            {KNOWN_WORDS.includes(word) ? word : <Misspelt>{bare}</Misspelt>}
            {bare !== word && ","}
          </React.Fragment>
        );
      })}
    </SpellLayer>
    <TextArea id="deskripsi" defaultValue={DESCRIPTION} spellCheck={false} />
  </TextAreaStack>
);

const PhotoInput = () => {
  const ref = useRef<HTMLInputElement>(null);
  useEffect(() => {
    const transfer = new DataTransfer();
    transfer.items.add(new File([""], PHOTO_NAME, { type: "image/jpeg" }));
    if (ref.current) ref.current.files = transfer.files;
  }, []);
  return <FileInput ref={ref} id="foto" type="file" />;
};

export default function App() {
  return (
    <Screen>
      <GlobalStyle />
      <TabStrip>
        <IconButton $h={48} aria-label="Workspaces"><WorkspacesIcon /></IconButton>
        <IconButton $h={48} aria-label="Tab actions"><TabActionsIcon /></IconButton>
        <Tab>
          <GlobeIcon />
          <TabTitle>Tambah Barang</TabTitle>
          <IconButton $w={36} $h={36} aria-label="Close tab"><Cross s={14} /></IconButton>
        </Tab>
        <IconButton $w={51} $h={46} aria-label="New tab"><PlusIcon /></IconButton>
        <WindowControls>
          <IconButton $w={69} $h={50} aria-label="Minimize"><MinimizeIcon /></IconButton>
          <IconButton $w={69} $h={50} aria-label="Restore"><RestoreIcon /></IconButton>
          <IconButton $w={69} $h={50} aria-label="Close"><Cross s={16} w={2} /></IconButton>
        </WindowControls>
      </TabStrip>

      <Toolbar>
        <IconButton aria-label="Back"><BackIcon /></IconButton>
        <IconButton aria-label="Refresh"><RefreshIcon /></IconButton>
        <AddressBar>
          <SiteInfo $w={36} $h={36} $color="#666" aria-label="Site information"><InfoIcon /></SiteInfo>
          <AddressInput aria-label="Address" defaultValue="127.0.0.1:8000/barang/create" spellCheck={false} />
          <IconButton $w={48} $h={44} $color="#767676" aria-label="Zoom out"><ZoomOutIcon /></IconButton>
          <IconButton $w={48} $h={44} $color="#767676" aria-label="Add to favorites"><StarIcon /></IconButton>
        </AddressBar>
        <IconButton aria-label="Favorites"><FavoritesIcon /></IconButton>
        <IconButton aria-label="Profile"><ProfileIcon /></IconButton>
        <IconButton aria-label="More"><DotsIcon /></IconButton>
        <IconButton $w={60} aria-label="Copilot"><CopilotIcon id="nav" size={34} /></IconButton>
      </Toolbar>

      <Viewport>
        <Card>
          <Title><BsPlusCircle size={43} />Tambah Barang</Title>
          <form onSubmit={(e) => e.preventDefault()}>
            <FieldGrid>
              <Field>
                <Label htmlFor="kode">Kode Barang</Label>
                <TextInput id="kode" defaultValue="B005" />
              </Field>
              <Field>
                <Label htmlFor="nama">Nama Barang</Label>
                <TextInput id="nama" defaultValue="Tumbler Stanley" />
              </Field>
              <Field $wide>
                <Label htmlFor="deskripsi">Deskripsi</Label>
                <Description />
              </Field>
              <Field>
                <Label htmlFor="harga">Harga Satuan</Label>
                <TextInput id="harga" defaultValue="80000" />
              </Field>
              <Field>
                <Label htmlFor="jumlah">Jumlah</Label>
                <TextInput id="jumlah" defaultValue="5" />
              </Field>
              <Field $wide>
                <Label htmlFor="foto">Foto Barang</Label>
                <PhotoInput />
              </Field>
            </FieldGrid>
            <Actions>
              <BackLink href="#barang"><BsArrowLeft size={22} />Kembali</BackLink>
              <SaveButton type="submit"><BsSave size={22} />Simpan</SaveButton>
            </Actions>
          </form>
        </Card>
      </Viewport>

      <Taskbar>
        <Widgets $w={301} aria-label="Weather">
          <WeatherIcon />
          <Badge $bg="#c42b1c" $left={47} $w={24}>3</Badge>
        </Widgets>
        <IconButton $w={56} aria-label="Start"><StartIcon /></IconButton>
        <SearchBox>
          <SearchIcon />
          <SearchInput type="search" placeholder="Search" aria-label="Search" />
          <SceneArt />
        </SearchBox>
        {apps.map((app) => (
          <AppButton key={app.name} $active={app.active} aria-label={app.name}>
            {app.icon}
            {app.running && <Running $active={app.active} />}
          </AppButton>
        ))}
        <Tray>
          <IconButton $w={48} $color="#1b1b1b" aria-label="Hidden icons"><ChevronUp /></IconButton>
          <IconButton $w={48} aria-label="OneDrive"><CloudIcon /></IconButton>
          <IconButton $w={48} $color="#1b1b1b" aria-label="Wi-Fi"><WifiIcon /></IconButton>
          <IconButton $w={24} $color="#1b1b1b" aria-label="Volume muted"><MutedIcon /></IconButton>
          <IconButton $w={48} aria-label="Battery"><BatteryIcon /></IconButton>
          <Clock>9:28 AM<br />5/25/2025</Clock>
        </Tray>
      </Taskbar>
    </Screen>
  );
}
